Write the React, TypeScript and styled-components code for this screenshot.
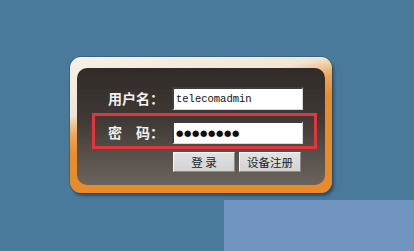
import styled, { createGlobalStyle } from "styled-components";

const GlobalStyle = createGlobalStyle`
  html, body {
    margin: 0;
    padding: 0;
    background: #4a7a9b;
    width: 414px;
    height: 251px;
    overflow: hidden;
  }
  * { box-sizing: border-box; }
`;

const Page = styled.div`
  width: 414px;
  height: 251px;
  padding-top: 57px;
  display: flex;
  flex-direction: column;
`;

const Frame = styled.div`
  margin-left: 70px;
  width: 262px;
  height: 136px;
  padding: 11px 7px 8px 7px;
  border-radius: 11px;
  background: linear-gradient(167deg, #f6f1e8 0%, #f1e6d4 30%, #eea556 40%, #e98c2a 50%, #e8892a 100%);
  box-shadow: 0 0 0 1px rgba(40, 70, 95, 0.45), 2px 3px 3px rgba(25, 50, 80, 0.6);
`;

const Panel = styled.div`
  width: 248px;
  height: 117px;
  border-radius: 10px;
  background: linear-gradient(180deg, #302b28 0%, #403a36 45%, #6b645d 100%);
  padding: 11px 0 0 15px;
  display: flex;
  flex-direction: column;
`;

const Row = styled.div<{ $highlight?: boolean }>`
  width: 225px;
  height: 36px;
  border: 3px solid ${p => (p.$highlight ? "#e2343a" : "transparent")};
  margin-top: ${p => (p.$highlight ? "-2px" : "0")};
  padding: 5px 0 0 13px;
  display: flex;
  align-items: flex-start;
`;

const Label = styled.label`
  width: 64px;
  height: 23px;
  line-height: 23px;
  color: #f0f0f0;
  font-family: "Noto Sans CJK SC", sans-serif;
  font-weight: 700;
  font-size: 14px;
  white-space: pre;
`;

const Field = styled.div`
  width: 131px;
  height: 23px;
  background: #ffffff;
  border-top: 2px solid #3e3e3e;
  border-left: 2px solid #3e3e3e;
  border-right: 1px solid #d8d8d8;
  border-bottom: 1px solid #d8d8d8;
  padding-left: 2px;
  display: flex;
  align-items: center;
  color: #111;
  font-family: "Liberation Mono", monospace;
  font-size: 10.5px;
`;

const Dots = styled.span`
  font-family: "DejaVu Sans", sans-serif;
  font-size: 8.5px;
  letter-spacing: 0.6px;
  color: #111;
`;

const Buttons = styled.div`
  display: flex;
  gap: 4px;
  padding-left: 81px;
  margin-top: 3px;
`;

const Button = styled.button`
  width: 62px;
  height: 20px;
  padding: 0;
  background: linear-gradient(180deg, #e2e2e2 0%, #d2d2d2 100%);
  border-top: 1px solid #f4f4f4;
  border-left: 1px solid #f4f4f4;
  border-right: 1px solid #8a8a8a;
  border-bottom: 1px solid #8a8a8a;
  color: #222;
  font-family: "Noto Sans CJK SC", sans-serif;
  font-size: 11.5px;
  line-height: 18px;
  white-space: pre;
`;

const Block = styled.div`
  margin-left: 224px;
  margin-top: 7px;
  flex: 1;
  background: #7194c0;
`;

export default function App() {
  return (
    <>
      <GlobalStyle />
      <Page>
        <Frame>
          <Panel>
            <Row>
              <Label>用户名：</Label>
              <Field>telecomadmin</Field>
            </Row>
            <Row $highlight>
              <Label>{"密\u3000码："}</Label>
              <Field>
                <Dots>●●●●●●●●</Dots>
              </Field>
            </Row>
            <Buttons>
              <Button>登 录</Button>
              <Button>设备注册</Button>
            </Buttons>
          </Panel>
        </Frame>
        <Block />
      </Page>
    </>
  );
}
